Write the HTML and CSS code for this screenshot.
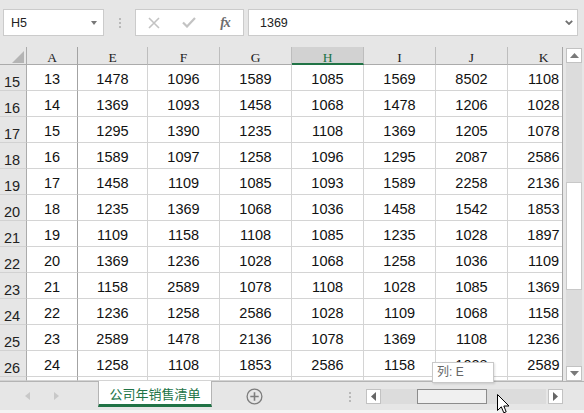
FILE: index.html
```html
<!DOCTYPE html>
<html>
<head>
<meta charset="utf-8">
<link rel="stylesheet" href="styles.css">
</head>
<body>
<div class="app">
  <div class="fbar">
    <div class="namebox"><span class="nb-text">H5</span><span class="dd"></span></div>
    <div class="vdots"><i></i><i></i><i></i></div>
    <div class="fnbox">
      <span class="slot"><svg width="12" height="12" viewBox="0 0 12 12"><path d="M1 1 L11 11 M11 1 L1 11" stroke="#c3c3c3" stroke-width="1.6" fill="none"/></svg></span>
      <span class="slot"><svg width="14" height="11" viewBox="0 0 14 11"><path d="M1 5.5 L5 9.5 L13 1" stroke="#c3c3c3" stroke-width="2.2" fill="none"/></svg></span>
      <span class="slot fx">fx</span>
    </div>
    <div class="formula"><span class="f-text">1369</span><svg class="chev" width="8" height="5" viewBox="0 0 8 5"><path d="M0.8 0.8 L4 4 L7.2 0.8" stroke="#707070" stroke-width="1.8" fill="none"/></svg></div>
  </div>

  <div class="main">
    <div class="sheet">
      <div class="row hdr">
        <div class="c rh corner"><span class="tri"></span></div>
        <div class="c ca">A</div>
        <div class="c ce">E</div>
        <div class="c cw">F</div>
        <div class="c cw">G</div>
        <div class="c cw sel">H</div>
        <div class="c cw">I</div>
        <div class="c cw">J</div>
        <div class="c cw">K</div>
      </div>
      <div class="row"><div class="c rh">15</div><div class="c ca">13</div><div class="c ce">1478</div><div class="c cw">1096</div><div class="c cw">1589</div><div class="c cw">1085</div><div class="c cw">1569</div><div class="c cw">8502</div><div class="c cw">1108</div></div>
      <div class="row"><div class="c rh">16</div><div class="c ca">14</div><div class="c ce">1369</div><div class="c cw">1093</div><div class="c cw">1458</div><div class="c cw">1068</div><div class="c cw">1478</div><div class="c cw">1206</div><div class="c cw">1028</div></div>
      <div class="row"><div class="c rh">17</div><div class="c ca">15</div><div class="c ce">1295</div><div class="c cw">1390</div><div class="c cw">1235</div><div class="c cw">1108</div><div class="c cw">1369</div><div class="c cw">1205</div><div class="c cw">1078</div></div>
      <div class="row"><div class="c rh">18</div><div class="c ca">16</div><div class="c ce">1589</div><div class="c cw">1097</div><div class="c cw">1258</div><div class="c cw">1096</div><div class="c cw">1295</div><div class="c cw">2087</div><div class="c cw">2586</div></div>
      <div class="row"><div class="c rh">19</div><div class="c ca">17</div><div class="c ce">1458</div><div class="c cw">1109</div><div class="c cw">1085</div><div class="c cw">1093</div><div class="c cw">1589</div><div class="c cw">2258</div><div class="c cw">2136</div></div>
      <div class="row"><div class="c rh">20</div><div class="c ca">18</div><div class="c ce">1235</div><div class="c cw">1369</div><div class="c cw">1068</div><div class="c cw">1036</div><div class="c cw">1458</div><div class="c cw">1542</div><div class="c cw">1853</div></div>
      <div class="row"><div class="c rh">21</div><div class="c ca">19</div><div class="c ce">1109</div><div class="c cw">1158</div><div class="c cw">1108</div><div class="c cw">1085</div><div class="c cw">1235</div><div class="c cw">1028</div><div class="c cw">1897</div></div>
      <div class="row"><div class="c rh">22</div><div class="c ca">20</div><div class="c ce">1369</div><div class="c cw">1236</div><div class="c cw">1028</div><div class="c cw">1068</div><div class="c cw">1258</div><div class="c cw">1036</div><div class="c cw">1109</div></div>
      <div class="row"><div class="c rh">23</div><div class="c ca">21</div><div class="c ce">1158</div><div class="c cw">2589</div><div class="c cw">1078</div><div class="c cw">1108</div><div class="c cw">1028</div><div class="c cw">1085</div><div class="c cw">1369</div></div>
      <div class="row"><div class="c rh">24</div><div class="c ca">22</div><div class="c ce">1236</div><div class="c cw">1258</div><div class="c cw">2586</div><div class="c cw">1028</div><div class="c cw">1109</div><div class="c cw">1068</div><div class="c cw">1158</div></div>
      <div class="row"><div class="c rh">25</div><div class="c ca">23</div><div class="c ce">2589</div><div class="c cw">1478</div><div class="c cw">2136</div><div class="c cw">1078</div><div class="c cw">1369</div><div class="c cw">1108</div><div class="c cw">1236</div></div>
      <div class="row"><div class="c rh">26</div><div class="c ca">24</div><div class="c ce">1258</div><div class="c cw">1108</div><div class="c cw">1853</div><div class="c cw">2586</div><div class="c cw">1158</div><div class="c cw">1028</div><div class="c cw">2589</div></div>
      <div class="row partial"><div class="c rh"></div><div class="c ca"></div><div class="c ce"></div><div class="c cw"></div><div class="c cw"></div><div class="c cw"></div><div class="c cw"></div><div class="c cw"></div><div class="c cw"></div></div>
    </div>
    <div class="vscroll">
      <div class="sbtn vbtn"><svg width="9" height="5" viewBox="0 0 9 5"><path d="M0 5 L4.5 0 L9 5 Z" fill="#7a7a7a"/></svg></div>
      <div class="vtrack"><div class="vthumb"></div></div>
      <div class="sbtn vbtn"><svg width="9" height="5" viewBox="0 0 9 5"><path d="M0 0 L4.5 5 L9 0 Z" fill="#7a7a7a"/></svg></div>
    </div>
  </div>

  <div class="tabbar">
    <div class="tabnav">
      <svg width="5" height="8" viewBox="0 0 5 8"><path d="M5 0 L0 4 L5 8 Z" fill="#c8c8c8"/></svg>
      <svg class="nav2" width="5" height="8" viewBox="0 0 5 8"><path d="M0 0 L5 4 L0 8 Z" fill="#c8c8c8"/></svg>
    </div>
    <div class="tab">公司年销售清单</div>
    <div class="addsheet"><svg width="17" height="17" viewBox="0 0 17 17"><circle cx="8.5" cy="8.5" r="7.4" fill="none" stroke="#7d7d7d" stroke-width="1.3"/><path d="M8.5 4.3 V12.7 M4.3 8.5 H12.7" stroke="#7d7d7d" stroke-width="1.6"/></svg></div>
    <div class="vdots hd"><i></i><i></i><i></i></div>
    <div class="hscroll">
      <div class="sbtn hbtn"><svg width="5" height="9" viewBox="0 0 5 9"><path d="M5 0 L0 4.5 L5 9 Z" fill="#666"/></svg></div>
      <div class="htrack"><div class="hthumb"></div></div>
      <div class="sbtn hbtn"><svg width="5" height="9" viewBox="0 0 5 9"><path d="M0 0 L5 4.5 L0 9 Z" fill="#666"/></svg></div>
    </div>
  </div>
  <div class="status"></div>

  <div class="tooltip">列: E</div>
  <svg class="cursor" width="13" height="20" viewBox="0 0 13 20"><path d="M0.5 0.5 L0.5 16.5 L4.3 12.8 L6.8 18.8 L9.2 17.8 L6.8 12 L12 12 Z" fill="#fff" stroke="#000" stroke-width="1" stroke-linejoin="round"/></svg>
</div>
</body>
</html>
```
FILE: styles.css
```css
* { box-sizing: border-box; }
html, body { margin: 0; padding: 0; }
body {
  width: 584px;
  height: 413px;
  overflow: hidden;
  background: #e6e6e6;
  font-family: "Liberation Sans", Arial, sans-serif;
}
.app {
  position: relative;
  width: 584px;
  height: 413px;
  overflow: hidden;
}

/* formula bar */
.fbar {
  display: flex;
  height: 47px;
  padding: 9px 6px 0 3px;
}
.namebox {
  width: 101px;
  height: 27px;
  background: #fff;
  border: 1px solid #cbcbcb;
  display: flex;
  align-items: center;
  justify-content: space-between;
  padding: 0 6px 0 7px;
  font-size: 12.5px;
  color: #222;
}
.dd {
  width: 0;
  height: 0;
  border-left: 3.5px solid transparent;
  border-right: 3.5px solid transparent;
  border-top: 4px solid #777;
  margin-top: 1px;
}
.vdots {
  width: 31px;
  display: flex;
  flex-direction: column;
  align-items: center;
  justify-content: center;
  gap: 2px;
  height: 27px;
}
.vdots i {
  display: block;
  width: 2px;
  height: 2px;
  background: #b9b9b9;
}
.fnbox {
  width: 109px;
  height: 27px;
  background: #fff;
  border: 1px solid #cbcbcb;
  display: flex;
  align-items: center;
  margin-right: 4px;
}
.slot {
  width: 35.6px;
  display: flex;
  justify-content: center;
  align-items: center;
}
.fx {
  font-family: "Liberation Serif", "Times New Roman", serif;
  font-style: italic;
  font-size: 14px;
  color: #6e6e6e;
  letter-spacing: -1px;
  font-weight: bold;
}
.formula {
  flex: 1;
  height: 27px;
  background: #fff;
  border: 1px solid #cbcbcb;
  display: flex;
  align-items: center;
  justify-content: space-between;
  padding: 0 4px 0 11px;
  font-size: 12.5px;
  color: #222;
}

/* sheet */
.main {
  display: flex;
  height: 334px;
}
.sheet {
  width: 563px;
  overflow: hidden;
  border-right: 1px solid #a6a6a6;
  background: #fff;
}
.row {
  display: flex;
  height: 26px;
  width: 700px;
}
.row.hdr { height: 18px; background: #e6e6e6; }
.row.partial { height: 4px; }
.c {
  flex: none;
  height: 100%;
  border-right: 1px solid #d4d4d4;
  border-bottom: 1px solid #d4d4d4;
  text-align: center;
  font-size: 14.5px;
  padding-top: 3px;
  line-height: 22px;
  color: #111;
  overflow: hidden;
  white-space: nowrap;
}
.rh {
  width: 27px;
  background: #e6e6e6;
  border-right: 1px solid #ababab;
  border-bottom: 1px solid #d2d2d2;
  display: flex;
  align-items: flex-end;
  justify-content: flex-start;
  padding: 0 0 0 4px;
  line-height: 15px;
  color: #222;
}
.ca { width: 51px; border-right-color: #a3a3a3; }
.ce { width: 70px; }
.cw { width: 72px; }
.hdr .c {
  border-bottom: 1px solid #ababab;
  border-right: 1px solid #bdbdbd;
  font-family: "Liberation Serif", "Times New Roman", serif;
  font-size: 13.5px;
  line-height: 13px;
  padding-top: 4px;
  color: #222;
}
.hdr .ca { border-right-color: #a3a3a3; }
.hdr .rh { border-right-color: #ababab; position: relative; }
.hdr .sel {
  background: #d2d2d2;
  color: #217346;
  border-bottom: 2px solid #217346;
}
.tri {
  position: absolute;
  right: 2px;
  bottom: 1px;
  width: 0;
  height: 0;
  border-left: 12px solid transparent;
  border-bottom: 12px solid #b4b4b4;
}

/* vertical scrollbar */
.vscroll {
  width: 21px;
  padding: 1px 2px 0 3px;
  display: flex;
  flex-direction: column;
}
.sbtn {
  background: #fff;
  border: 1px solid #c2c2c2;
  display: flex;
  align-items: center;
  justify-content: center;
  flex: none;
}
.vbtn { height: 15px; width: 16px; }
.vtrack {
  flex: 1;
  background: #dcdcdc;
  padding-top: 119px;
}
.vthumb {
  height: 108px;
  background: #fff;
  border: 1px solid #c8c8c8;
}

/* tab bar */
.tabbar {
  display: flex;
  height: 29px;
  border-top: 1px solid #b4b4b4;
  align-items: flex-start;
}
.tabnav {
  width: 98px;
  display: flex;
  align-items: center;
  height: 27px;
  padding-left: 25px;
}
.nav2 { margin-left: 24px; }
.tab {
  width: 114px;
  height: 26px;
  margin-top: -1px;
  background: #fff;
  border-left: 1px solid #b4b4b4;
  border-right: 1px solid #b4b4b4;
  border-bottom: 3px solid #217346;
  color: #217346;
  font-family: "Noto Sans CJK SC", "Liberation Sans", sans-serif;
  font-size: 13px;
  text-align: center;
  line-height: 24px;
  padding-top: 1px;
}
.addsheet {
  width: 130px;
  height: 27px;
  display: flex;
  align-items: center;
  padding-left: 34px;
  padding-top: 2px;
}
.vdots.hd {
  width: 24px;
  height: 27px;
  padding-top: 2px;
  align-items: flex-start;
  padding-left: 7px;
}
.hscroll {
  display: flex;
  margin-top: 7px;
  height: 15px;
}
.hbtn { width: 15px; height: 15px; }
.htrack {
  width: 165px;
  background: #dcdcdc;
  margin-right: 2px;
  padding-left: 36px;
}
.hthumb {
  width: 70px;
  height: 15px;
  background: #f0f0f0;
  border: 1px solid #8c8c8c;
}
.status {
  height: 3px;
  background: #f4f4f4;
}

/* overlays */
.tooltip {
  position: absolute;
  left: 432px;
  top: 362px;
  width: 62px;
  height: 21px;
  background: #fff;
  border: 1px solid #c8c8c8;
  box-shadow: 1px 1px 2px rgba(0,0,0,0.12);
  font-size: 12px;
  color: #666;
  padding-left: 4px;
  line-height: 19px;
  font-family: "Liberation Sans", "Noto Sans CJK SC", sans-serif;
}
.cursor {
  position: absolute;
  left: 497px;
  top: 394px;
}
```
